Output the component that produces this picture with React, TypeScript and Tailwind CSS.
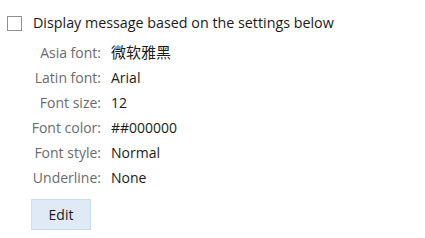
import React from "react";

const rows: [string, string][] = [
  ["Asia font:", "微软雅黑"],
  ["Latin font:", "Arial"],
  ["Font size:", "12"],
  ["Font color:", "##000000"],
  ["Font style:", "Normal"],
  ["Underline:", "None"],
];

export default function App() {
  return (
    <div
      className="w-[425px] h-[238px] bg-white overflow-hidden"
      style={{ fontFamily: '"Open Sans", "Noto Sans CJK SC", sans-serif' }}
    >
      <div className="flex items-center h-[25px] mt-[11px] pl-[7px]">
        <div className="w-[15px] h-[15px] border border-[#8f8f8f] bg-white shrink-0" />
        <span className="ml-[11px] text-[14.3px] text-[#1a1a1a] leading-none">
          Display message based on the settings below
        </span>
      </div>
      <div className="mt-[4px] flex flex-col">
        {rows.map(([l, v], i) => (
          <div key={l} className="flex items-center h-[25px] text-[14px] leading-none">
            <span className="w-[101px] text-right text-[#6b6b6b] whitespace-nowrap">{l}</span>
            <span
              className={
                i === 0
                  ? "ml-[10px] text-[#1a1a1a] whitespace-nowrap text-[15px]"
                  : "ml-[10px] text-[#1a1a1a] whitespace-nowrap"
              }
            >
              {v}
            </span>
          </div>
        ))}
      </div>
      <div className="pl-[31px] mt-[9px]">
        <button className="w-[60px] h-[31px] bg-[#dfeaf6] border border-[#cbdcee] text-[14px] text-[#1a1a1a] leading-none">
          Edit
        </button>
      </div>
    </div>
  );
}
